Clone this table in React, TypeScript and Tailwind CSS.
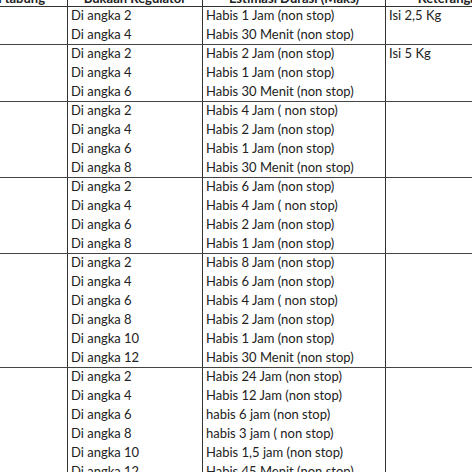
import React from "react";

type Group = { note?: string; rows: [string, string][] };

const groups: Group[] = [
  {
    note: "Isi 2,5 Kg",
    rows: [
      ["Di angka 2", "Habis 1 Jam (non stop)"],
      ["Di angka 4", "Habis 30 Menit (non stop)"],
    ],
  },
  {
    note: "Isi 5 Kg",
    rows: [
      ["Di angka 2", "Habis 2 Jam (non stop)"],
      ["Di angka 4", "Habis 1 Jam (non stop)"],
      ["Di angka 6", "Habis 30 Menit (non stop)"],
    ],
  },
  {
    rows: [
      ["Di angka 2", "Habis 4 Jam ( non stop)"],
      ["Di angka 4", "Habis 2 Jam (non stop)"],
      ["Di angka 6", "Habis 1 Jam (non stop)"],
      ["Di angka 8", "Habis 30 Menit (non stop)"],
    ],
  },
  {
    rows: [
      ["Di angka 2", "Habis 6 Jam (non stop)"],
      ["Di angka 4", "Habis 4 Jam ( non stop)"],
      ["Di angka 6", "Habis 2 Jam (non stop)"],
      ["Di angka 8", "Habis 1 Jam (non stop)"],
    ],
  },
  {
    rows: [
      ["Di angka 2", "Habis 8 Jam (non stop)"],
      ["Di angka 4", "Habis 6 Jam (non stop)"],
      ["Di angka 6", "Habis 4 Jam ( non stop)"],
      ["Di angka 8", "Habis 2 Jam (non stop)"],
      ["Di angka 10", "Habis 1 Jam (non stop)"],
      ["Di angka 12", "Habis 30 Menit (non stop)"],
    ],
  },
  {
    rows: [
      ["Di angka 2", "Habis 24 Jam (non stop)"],
      ["Di angka 4", "Habis 12 Jam (non stop)"],
      ["Di angka 6", "habis 6 jam (non stop)"],
      ["Di angka 8", "habis 3 jam ( non stop)"],
      ["Di angka 10", "Habis 1,5 jam (non stop)"],
      ["Di angka 12", "Habis 45 Menit (non stop)"],
    ],
  },
];

export default function App() {
  return (
    <div
      className="w-[472px] h-[472px] overflow-hidden bg-white text-[#222] text-[13px]"
      style={{ fontFamily: "Lato, 'Open Sans', sans-serif" }}
    >
      <div className="flex w-[516px] h-[7px] border-b border-[#333] font-bold">
        <div className="w-[68px] shrink-0 border-r border-[#333] flex items-end justify-end pr-[22px] pb-[1px] leading-none">
          <span className="whitespace-nowrap">Ukuran tabung</span>
        </div>
        <div className="w-[135px] shrink-0 border-r border-[#333] flex items-end justify-center pb-[1px] leading-none">
          <span className="whitespace-nowrap">Bukaan Regulator</span>
        </div>
        <div className="w-[183px] shrink-0 border-r border-[#333] flex items-end justify-center pb-[1px] leading-none">
          <span className="whitespace-nowrap">Estimasi Durasi (Maks)</span>
        </div>
        <div className="w-[130px] shrink-0 flex items-end justify-center pb-[1px] leading-none">
          <span className="whitespace-nowrap">Keterangan</span>
        </div>
      </div>
      {groups.map((g, gi) => (
        <div
          key={gi}
          className="flex w-[516px] border-b border-[#444]"
          style={{ height: g.rows.length * 19 }}
        >
          <div className="w-[68px] shrink-0 border-r border-[#333]" />
          <div className="w-[135px] shrink-0 border-r border-[#333] flex flex-col">
            {g.rows.map((r, ri) => (
              <div key={ri} className="h-[19px] shrink-0 pl-[3px] leading-[16px] whitespace-nowrap">
                {r[0]}
              </div>
            ))}
          </div>
          <div className="w-[183px] shrink-0 border-r border-[#333] flex flex-col">
            {g.rows.map((r, ri) => (
              <div key={ri} className="h-[19px] shrink-0 pl-[3px] leading-[16px] whitespace-nowrap">
                {r[1]}
              </div>
            ))}
          </div>
          <div className="w-[130px] shrink-0 pl-[3px] leading-[16px] whitespace-nowrap">
            {g.note}
          </div>
        </div>
      ))}
    </div>
  );
}
